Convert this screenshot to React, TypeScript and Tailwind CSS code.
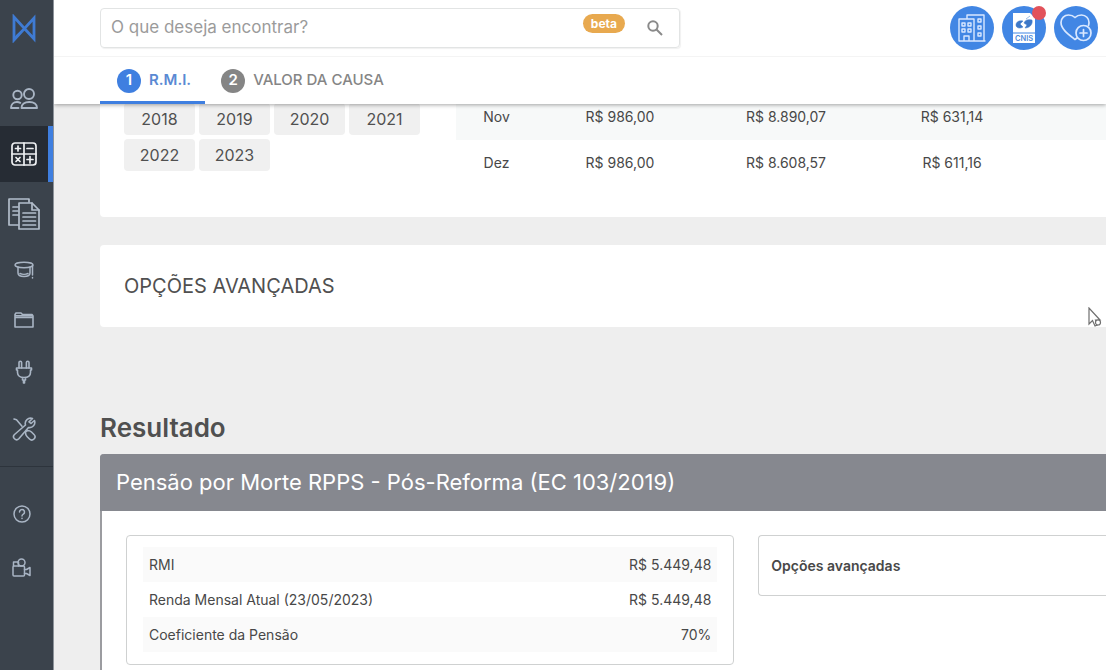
import type { ReactNode } from "react";

type IconProps = { size: string; children: ReactNode; box?: string; stroke?: number };

function Icon({ size, children, box = "0 0 24 24", stroke = 1.5 }: IconProps) {
  return (
    <svg
      className={size}
      viewBox={box}
      fill="none"
      stroke="currentColor"
      strokeWidth={stroke}
      strokeLinecap="round"
      strokeLinejoin="round"
      aria-hidden="true"
    >
      {children}
    </svg>
  );
}

const usersIcon = (
  <Icon size="h-6 w-7" box="0 0 28 24" stroke={1.9}>
    <circle cx="7.500" cy="8" r="4.200" />
    <circle cx="19" cy="7" r="5" />
    <path d="M8.500 21H1c0-3.800 2.500-6 6-6 1.300 0 2.400.300 3.300.800" />
    <path d="M11.500 21H27c0-4-3-6-7.700-6s-7.800 2-7.800 6z" />
  </Icon>
);

const calcIcon = (
  <Icon size="h-6 w-[26px]" box="0 0 26 24" stroke={1.7}>
    <rect x="1" y="1" width="24" height="22" rx="3" />
    <path d="M13 1v22M1 12h24M7 4v5M4.500 6.500h5M16 6.500h6M5 15.500l4 4M9 15.500l-4 4M19 14.500v6.500M16 17.500h6" />
  </Icon>
);

const docsIcon = (
  <Icon size="h-8 w-8" box="0 0 32 32" stroke={1.7}>
    <path d="M21 4V1H1v26h9" />
    <path d="M11 5h13l7 7v19H11z" />
    <path d="M24 5v7h7M15 15h12.500M15 19h12.500M15 23h12.500M15 27h12.500M5 9h5M5 13h5M5 17h5" />
  </Icon>
);

const capIcon = (
  <Icon size="h-[18px] w-5" box="0 0 20 18" stroke={1.5}>
    <ellipse cx="10" cy="4" rx="9" ry="2.700" />
    <path d="M4 6v6c0 2.500 2.500 3.500 6 3.500s6-1 6-3.500V6M6 12.500c2 1 6 1 8 0M18.500 4.500V14M18.500 16.500v.500" />
  </Icon>
);

const folderIcon = (
  <Icon size="h-4 w-5" box="0 0 20 16" stroke={1.6}>
    <path d="M1 15V2.500L2 1h5l1.500 1.500H18L19 4v11zM1 5.500h18M2 3.800h16" />
  </Icon>
);

const plugIcon = (
  <Icon size="h-6 w-[18px]" box="0 0 18 24" stroke={1.6}>
    <path d="M4 8V2.500a1.300 1.300 0 0 1 2.600 0V8M11.400 8V2.500a1.300 1.300 0 0 1 2.600 0V8" />
    <path d="M1.500 8h15v2h-1v2.500c0 3-2.500 5-6.500 5s-6.500-2-6.500-5V10h-1zM7.500 17.500V20h1v3h1v-3h1v-2.500" />
  </Icon>
);

const toolsIcon = (
  <Icon size="h-6 w-6" stroke={1.6}>
    <path d="M2 2l2.500.800 5.500 6.400M14 14.500l1.500-1c2 0 3 .500 4 1.500l2.500 2.500a3 3 0 0 1-4.500 4.500L15 19.500c-1-1-1.500-2.500-1.500-4" />
    <path d="M20.500 1.500a5.300 5.300 0 0 0-7 6.500L2.500 17.500a3 3 0 0 0 4.300 4.300L16.500 10.500a5.300 5.300 0 0 0 6-7L19 6.500 17 4.800z" />
  </Icon>
);

const helpIcon = (
  <Icon size="h-[18px] w-[18px]" box="0 0 18 18" stroke={1.5}>
    <circle cx="9" cy="9" r="8" />
    <path d="M6.500 7a2.500 2.500 0 1 1 3.800 2.100C9.300 9.700 9 10 9 11M9 13.300v.200" />
  </Icon>
);

const cameraIcon = (
  <Icon size="h-[19px] w-[19px]" box="0 0 19 19" stroke={1.5}>
    <rect x="1" y="8" width="11.500" height="10" rx="1" />
    <path d="M12.500 11.500h2l3.500-2v8l-3.500-2h-2M1.500 8V4h5v4" />
    <circle cx="9.500" cy="4.500" r="3.500" />
  </Icon>
);

const navItems = [
  { label: "Clientes", icon: usersIcon, look: "h-[54px] border-transparent text-[#a9b5c4]" },
  { label: "Cálculos", icon: calcIcon, look: "h-14 border-[#3f7fe0] bg-[#262c34] text-[#eef0f2]" },
  { label: "Documentos", icon: docsIcon, look: "h-16 border-transparent text-[#b3becb]" },
  { label: "Cursos", icon: capIcon, look: "h-12 border-transparent text-[#a9b5c4]" },
  { label: "Arquivos", icon: folderIcon, look: "h-[52px] border-transparent text-[#a9b5c4]" },
  { label: "Integrações", icon: plugIcon, look: "h-[52px] border-transparent text-[#a9b5c4]" },
  { label: "Ferramentas", icon: toolsIcon, look: "h-[62px] border-transparent text-[#a9b5c4]" },
];

function Sidebar() {
  return (
    <aside className="w-[54px] shrink-0 border-r border-[#8d939a] bg-[#3b434c]">
      <a href="#inicio" aria-label="Início" className="flex h-[72px] items-start justify-center pt-3.5 pr-[5px]">
        <svg className="h-[29px] w-6" viewBox="0 0 24 29" fill="none" stroke="#3f7bd3" strokeWidth="2.800" aria-hidden="true">
          <path d="M2 3v23L22 4v21L2 3z" />
          <path d="M4 22l8-7 8 7" strokeWidth="1.500" />
        </svg>
      </a>
      <nav aria-label="Principal">
        {navItems.map((item) => (
          <a
            key={item.label}
            href="#menu"
            aria-label={item.label}
            className={`flex items-center justify-center border-r-[5px] ${item.look}`}
          >
            {item.icon}
          </a>
        ))}
      </nav>
      <nav aria-label="Suporte" className="mt-1.5 border-t border-[#2d343c] pt-5 pr-2.5 text-[#a9b5c4]">
        <a href="#ajuda" aria-label="Ajuda" className="flex h-[54px] items-center justify-center">
          {helpIcon}
        </a>
        <a href="#videos" aria-label="Vídeos" className="flex h-[52px] items-center justify-center">
          {cameraIcon}
        </a>
      </nav>
    </aside>
  );
}

function Header() {
  return (
    <header className="relative z-10 bg-white shadow-[0_1px_4px_rgba(0,0,0,0.35)]">
      <div className="flex h-[57px] items-center justify-between border-b border-[#f4f4f4] pr-2 pl-[46px]">
        <form className="flex h-10 w-[580px] items-center rounded-sm border border-[#e2e4e4] pr-2 pl-2.5 shadow-[1px_1px_1px_rgba(0,0,0,0.06)]">
          <input
            type="text"
            aria-label="O que deseja encontrar?"
            placeholder="O que deseja encontrar?"
            className="min-w-0 flex-1 bg-transparent text-[17px] outline-none placeholder:text-[#9b9b9b]"
          />
          <span className="mr-3.5 mb-2.5 rounded-full bg-[#e8a94f] px-2 text-xs leading-[19px] font-bold text-white">beta</span>
          <button type="button" aria-label="Buscar" className="flex h-8 w-8 items-center justify-center text-[#8a8a8a]">
            <svg className="h-4 w-4" viewBox="0 0 16 16" fill="none" stroke="currentColor" strokeWidth="2" aria-hidden="true">
              <circle cx="6" cy="6" r="4.700" />
              <path d="M9.500 9.500l5.500 5.500" />
            </svg>
          </button>
        </form>
        <div className="flex gap-2">
          <button type="button" aria-label="Empresas" className="flex h-11 w-11 items-center justify-center rounded-full bg-[#4186e4] text-[#d9e8ff]">
            <Icon size="h-7 w-7" box="0 0 28 28" stroke={1.4}>
              <path d="M1 27V5h15v22zM9 5V1h17v26H16M1 27h26M6 27v-5h5v5" />
              <path d="M4 9h3v3H4zM10 9h3v3h-3zM4 15h3v3H4zM10 15h3v3h-3zM20 5h3v3h-3zM20 12h3v3h-3zM20 19h3v3h-3z" />
            </Icon>
          </button>
          <button type="button" aria-label="CNIS" className="relative flex h-11 w-11 items-center justify-center rounded-full bg-[#4186e4]">
            <svg className="h-[30px] w-[22px]" viewBox="0 0 22 30" aria-hidden="true">
              <path d="M0 0h17l5 5v25H0z" fill="#fff" />
              <path d="M0 20h22" stroke="#4186e4" />
              <path d="M3 12c0-3 3-5 7-4l-3 3 3 3c-3 2-7 1-7-2zM19 7c1 4-2 8-7 8l2-3-3-2c1-3 4-4 8-3zM13 6l4-3" fill="#3d78c8" stroke="#3d78c8" strokeWidth=".5" />
              <text x="11" y="28" textAnchor="middle" fontSize="7.500" fontWeight="600" fontFamily="Inter, sans-serif" fill="#4f8ada">
                CNIS
              </text>
            </svg>
            <span className="absolute top-0 right-0 h-3.5 w-3.5 rounded-full bg-[#e2525a]" />
          </button>
          <button type="button" aria-label="Favoritos" className="flex h-11 w-11 items-center justify-center rounded-full bg-[#4186e4] text-[#d9e8ff]">
            <Icon size="h-7 w-8" box="0 0 32 28" stroke={1.7}>
              <path d="M17 24l-2 1.500C8 20 1 15 1 8.500 1 4 4.500 1 8.500 1 11.500 1 13.500 2 15 3.500c1.500-1.500 3.500-2.500 6.500-2.500C26 1 29 4.500 29 8.500c0 1-.200 2-.500 3" />
              <circle cx="23.500" cy="19" r="7.500" />
              <path d="M23.500 15.500v7M20 19h7" />
            </Icon>
          </button>
        </div>
      </div>
      <nav aria-label="Etapas" className="flex h-[47px] pl-[46px]">
        <a href="#rmi" className="flex items-center gap-2 border-b-[3px] border-[#3f7fe0] pt-[3px] pr-3.5 pl-[17px] text-[15px] font-semibold text-[#5a89d3]">
          <span className="flex h-6 w-6 items-center justify-center rounded-full bg-[#3f7fe0] text-white">1</span>
          R.M.I.
        </a>
        <a href="#valor" className="flex items-center gap-2 border-b-[3px] border-transparent px-4 pt-[3px] text-[15px] font-medium text-[#858585]">
          <span className="flex h-6 w-6 items-center justify-center rounded-full bg-[#858585] font-semibold text-white">2</span>
          VALOR DA CAUSA
        </a>
      </nav>
    </header>
  );
}

const years = ["2018", "2019", "2020", "2021", "2022", "2023"];

const months = [
  ["Nov", "R$ 986,00", "R$ 8.890,07", "R$ 631,14"],
  ["Dez", "R$ 986,00", "R$ 8.608,57", "R$ 611,16"],
];

const results = [
  ["RMI", "R$ 5.449,48"],
  ["Renda Mensal Atual (23/05/2023)", "R$ 5.449,48"],
  ["Coeficiente da Pensão", "70%"],
];

function Contributions() {
  return (
    <section className="-mt-2.5 flex items-start rounded-l bg-white pb-[31px] pl-6">
      <div className="grid shrink-0 grid-cols-4 gap-1 pt-[9px]">
        {years.map((year) => (
          <button key={year} type="button" className="h-8 w-[71px] rounded bg-[#f0f0f0] text-base text-[#505050]">
            {year}
          </button>
        ))}
      </div>
      <table className="ml-9 flex-1 table-fixed text-center text-sm text-[#484848]">
        <colgroup>
          <col className="w-[81px]" />
          <col className="w-[166px]" />
          <col className="w-[166px]" />
          <col className="w-[166px]" />
          <col />
        </colgroup>
        <tbody>
          {months.map((row) => (
            <tr key={row[0]} className="h-[46px] odd:bg-[#f7f9f9]">
              {row.map((cell, i) => (
                <td key={i}>{cell}</td>
              ))}
              <td />
            </tr>
          ))}
        </tbody>
      </table>
    </section>
  );
}

export default function App() {
  return (
    <div className="flex min-h-screen bg-[#eeeeee] font-['Inter',sans-serif]">
      <Sidebar />
      <div className="flex min-w-0 flex-1 flex-col overflow-hidden">
        <Header />
        <main className="flex flex-1 flex-col pl-[46px]">
          <Contributions />

          <section className="relative mt-7 flex h-[82px] items-center rounded-l bg-white pl-6">
            <h2 className="text-xl text-[#505050]">OPÇÕES AVANÇADAS</h2>
            <svg className="absolute right-1 bottom-0 h-5 w-3.5" viewBox="0 0 14 20" fill="#fff" stroke="#6f6f6f" strokeWidth="1.200" aria-hidden="true">
              <path d="M1 1v16l3.500-3.500L7 19l2.500-1-2-5H12z" />
              <circle cx="10" cy="15.500" r="2.500" />
            </svg>
          </section>

          <h2 className="mt-[85px] text-[26px] leading-8 font-semibold text-[#505050]">Resultado</h2>

          <section className="mt-2.5 flex flex-1 flex-col rounded-tl border-l-2 border-[#9b9ca0] bg-white">
            <h3 className="-ml-0.5 flex h-[57px] items-center rounded-tl bg-[#86888f] pl-4 text-[22px] text-white">
              Pensão por Morte RPPS - Pós-Reforma (EC 103/2019)
            </h3>
            <div className="grid grid-cols-[7fr_4fr] items-start gap-6 pt-6 pb-1 pl-6">
              <dl className="rounded border border-[#cfd1d1] px-4 pt-[11px] pb-3 text-sm text-[#484848]">
                {results.map(([label, value]) => (
                  <div key={label} className="flex h-[35px] items-center justify-between px-1.5 odd:bg-[#fafafa]">
                    <dt>{label}</dt>
                    <dd>{value}</dd>
                  </div>
                ))}
              </dl>
              <button type="button" className="h-[61px] rounded-l border border-r-0 border-[#cfd1d1] px-3 text-left text-sm font-semibold text-[#484848]">
                Opções avançadas
              </button>
            </div>
          </section>
        </main>
      </div>
    </div>
  );
}
